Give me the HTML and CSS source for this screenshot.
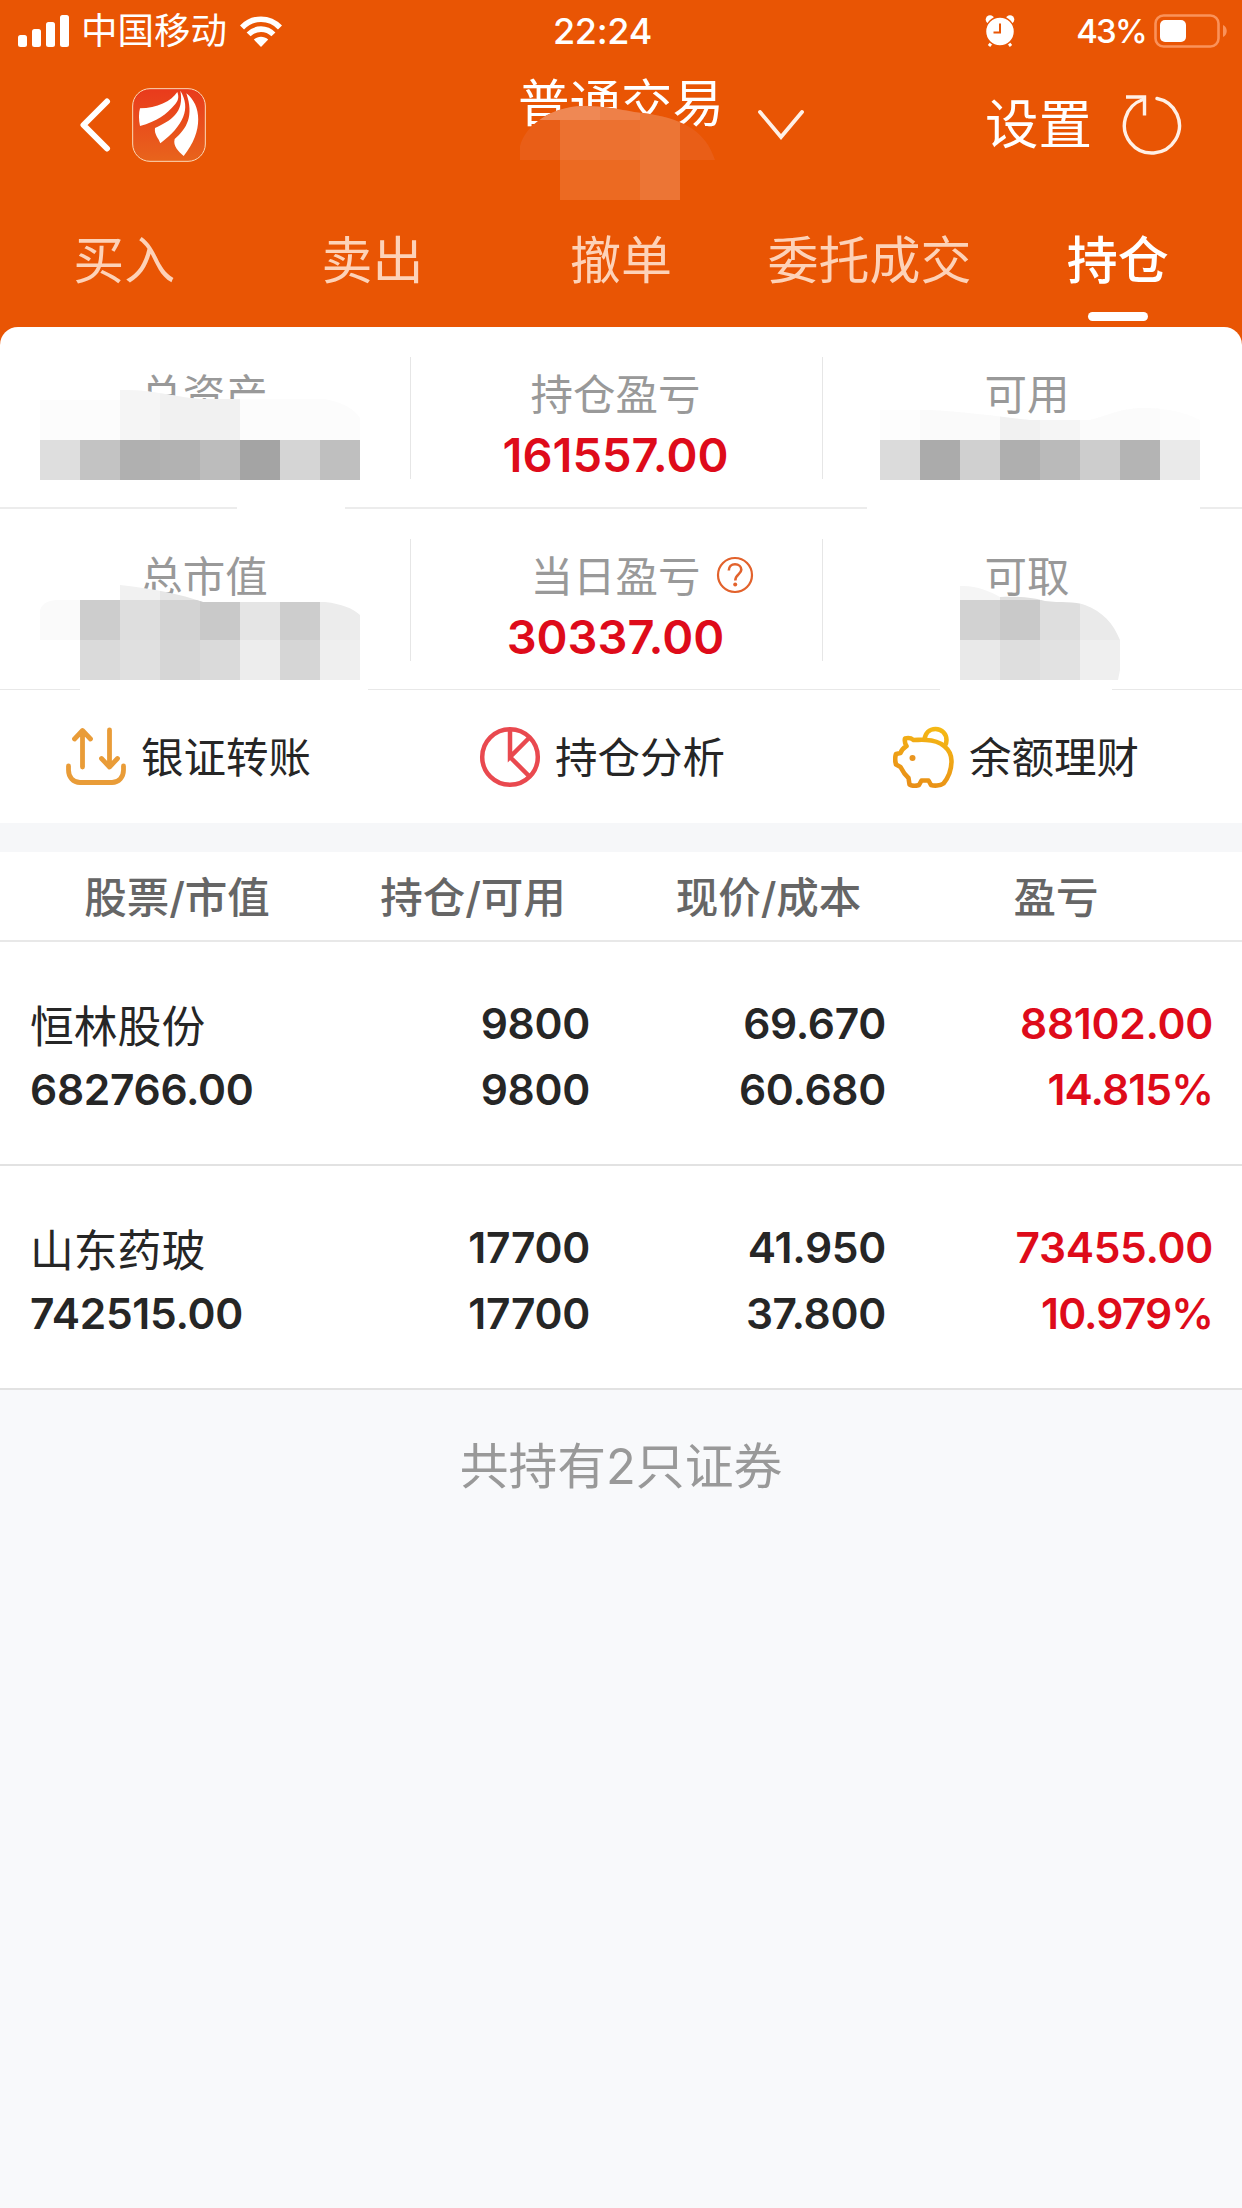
FILE: index.html
```html
<!DOCTYPE html>
<html lang="zh-CN">
<head>
  <meta charset="UTF-8">
  <meta name="viewport" content="width=device-width, initial-scale=1.0">
  <title>持仓</title>
  <link rel="stylesheet" href="styles.css">
</head>
<body>
  <header class="header">
    <div class="status">
      <div class="status-left">
        <svg class="signal" width="52" height="33" viewBox="0 0 52 33" fill="#fff">
          <rect x="0" y="20" width="9" height="12" rx="2.5"/>
          <rect x="14" y="14" width="9" height="18" rx="2.5"/>
          <rect x="28" y="7" width="9" height="25" rx="2.5"/>
          <rect x="42" y="0" width="9" height="32" rx="2.5"/>
        </svg>
        <span class="carrier">中国移动</span>
        <svg width="42" height="31" viewBox="0 0 42 31" fill="none" stroke="#fff" stroke-width="5.6">
          <path d="M2 11.5C12.500 .5 29.500 .5 40 11.500"/>
          <path d="M8.600 18.400C15.500 11.400 26.500 11.400 33.400 18.400"/>
          <path d="M21 31L13.800 23.600C18 19.800 24 19.800 28.200 23.600Z" fill="#fff" stroke="none"/>
        </svg>
      </div>
      <span class="time">22:24</span>
      <div class="status-right">
        <svg class="alarm" width="30" height="32" viewBox="0 0 30 32">
          <path d="M4 31l4-5M26 31l-4-5" stroke="#fff" stroke-width="3"/>
          <circle cx="5" cy="4.500" r="4.300" fill="#fff"/>
          <circle cx="25" cy="4.500" r="4.300" fill="#fff"/>
          <circle cx="15" cy="16.500" r="14.500" fill="#fff" stroke="#e95504" stroke-width="1.500"/>
          <path d="M15 8.500V17.500H8.500" fill="none" stroke="#e95504" stroke-width="2"/>
        </svg>
        <span class="percent">43%</span>
        <svg width="74" height="34" viewBox="0 0 74 34">
          <rect x="1.500" y="1.500" width="63" height="31" rx="8" fill="none" stroke="#fa925a" stroke-width="2.600"/>
          <rect x="6" y="6" width="26" height="22" rx="5" fill="#fff"/>
          <path d="M69 11c5 2 5 10 0 12z" fill="#fa925a"/>
        </svg>
      </div>
    </div>

    <div class="nav">
      <div class="nav-left">
        <svg width="32" height="56" viewBox="0 0 32 56" fill="none" stroke="#fff" stroke-width="6" stroke-linecap="round" stroke-linejoin="round">
          <path d="M27 4.500L3.500 28L27 51.500"/>
        </svg>
        <svg class="logo" width="74" height="74" viewBox="0 0 222 222">
          <defs>
            <linearGradient id="logoBg" x1="0" y1="0" x2="0" y2="1">
              <stop offset="0" stop-color="#e93a1c"/>
              <stop offset="1" stop-color="#e8641c"/>
            </linearGradient>
          </defs>
          <rect x="2" y="2" width="218" height="218" rx="52" fill="url(#logoBg)" stroke="#fbd9b8" stroke-width="3"/>
          <g fill="#fff">
            <path d="M24 61C75 60 118 40 136 12C142 28 138 38 130 48C103 80 75 100 24 114C20 95 20 75 24 61Z"/>
            <path d="M145 8C178 62 155 112 85 166C80 150 66 140 69 120C115 98 158 75 145 8Z"/>
            <path d="M163 16C208 50 216 130 155 204C140 190 122 175 128 153C165 122 186 84 163 16Z"/>
          </g>
        </svg>
      </div>
      <div class="nav-title">
        <span>普通交易</span>
        <svg class="arrow-down" width="46" height="30" viewBox="0 0 46 30" fill="none" stroke="#fff0e6" stroke-width="3.800" stroke-linecap="round">
          <path d="M2 2L23 27L44 2"/>
        </svg>
        <svg class="mask mask-title" width="196" height="94" viewBox="520 106 196 94">
          <clipPath id="clipTitle">
            <path d="M520 146C526 124 552 107 582 106C612 106 628 112 650 114C685 120 706 132 715 160V200H520Z"/>
          </clipPath>
          <g clip-path="url(#clipTitle)">
            <rect x="520" y="100" width="196" height="60" fill="#e95e17"/>
            <rect x="520" y="100" width="80" height="20" fill="#ef8854"/>
            <rect x="600" y="100" width="40" height="20" fill="#ee8048"/>
            <rect x="640" y="100" width="40" height="20" fill="#ec7737"/>
            <rect x="560" y="120" width="80" height="40" fill="#ec7130"/>
            <rect x="640" y="120" width="40" height="80" fill="#ec7535"/>
            <rect x="560" y="160" width="80" height="40" fill="#ec6a22"/>
          </g>
        </svg>
      </div>
      <div class="nav-right">
        <span>设置</span>
        <svg width="60" height="60" viewBox="0 0 60 60" fill="none" stroke="#fff0e6" stroke-width="3.400">
          <path d="M35 3.500A27.500 27.500 0 1 1 21 4.500" stroke-linecap="round"/>
          <path d="M4 2H22.500V20.500"/>
        </svg>
      </div>
    </div>

    <nav class="tabs">
      <span class="tab">买入</span>
      <span class="tab">卖出</span>
      <span class="tab">撤单</span>
      <span class="tab">委托成交</span>
      <span class="tab active">持仓</span>
    </nav>
  </header>

  <main>
    <section class="summary">
      <div class="summary-row">
        <div class="cell">
          <div class="label">总资产</div>
          <svg class="mask mask-asset" width="340" height="132" viewBox="30 388 340 132">
            <path d="M237 505H345V512H237Z" fill="#fff"/>
            <clipPath id="clipAsset">
              <path d="M40 400H120V390C150 389 170 396 200 399H325C345 403 355 410 360 418V480H40Z"/>
            </clipPath>
            <g clip-path="url(#clipAsset)">
              <rect x="40" y="388" width="320" height="92" fill="#fcfcfc"/>
              <rect x="120" y="388" width="40" height="52" fill="#f5f5f5"/>
              <rect x="160" y="388" width="80" height="52" fill="#f1f1f1"/>
              <rect x="40" y="440" width="40" height="40" fill="#dedede"/>
              <rect x="80" y="440" width="40" height="40" fill="#c3c3c3"/>
              <rect x="120" y="440" width="40" height="40" fill="#b0b0b0"/>
              <rect x="160" y="440" width="40" height="40" fill="#b2b2b2"/>
              <rect x="200" y="440" width="40" height="40" fill="#bcbcbc"/>
              <rect x="240" y="440" width="40" height="40" fill="#a4a4a4"/>
              <rect x="280" y="440" width="40" height="40" fill="#d5d5d5"/>
              <rect x="320" y="440" width="40" height="40" fill="#bfbfbf"/>
            </g>
          </svg>
        </div>
        <div class="cell">
          <div class="label">持仓盈亏</div>
          <div class="amount">161557.00</div>
        </div>
        <div class="cell">
          <div class="label">可用</div>
          <svg class="mask mask-usable" width="340" height="132" viewBox="864 388 340 132">
            <path d="M867 505H1200V512H867Z" fill="#fff"/>
            <clipPath id="clipUsable">
              <path d="M880 410H930C970 412 1000 417 1030 420H1090C1110 415 1120 408 1145 408C1165 408 1185 412 1200 420V480H880Z"/>
            </clipPath>
            <g clip-path="url(#clipUsable)">
              <rect x="880" y="400" width="320" height="40" fill="#fdfdfd"/>
              <rect x="920" y="400" width="80" height="40" fill="#fafafa"/>
              <rect x="1000" y="400" width="40" height="40" fill="#f1f1f1"/>
              <rect x="1040" y="400" width="40" height="40" fill="#f5f5f5"/>
              <rect x="1080" y="400" width="80" height="40" fill="#fbfbfb"/>
              <rect x="880" y="440" width="40" height="40" fill="#dbdbdb"/>
              <rect x="920" y="440" width="40" height="40" fill="#ababab"/>
              <rect x="960" y="440" width="40" height="40" fill="#d0d0d0"/>
              <rect x="1000" y="440" width="40" height="40" fill="#afafaf"/>
              <rect x="1040" y="440" width="40" height="40" fill="#bababa"/>
              <rect x="1080" y="440" width="40" height="40" fill="#cdcdcd"/>
              <rect x="1120" y="440" width="40" height="40" fill="#b4b4b4"/>
              <rect x="1160" y="440" width="40" height="40" fill="#eaeaea"/>
            </g>
          </svg>
        </div>
      </div>
      <div class="summary-row">
        <div class="cell">
          <div class="label">总市值</div>
          <svg class="mask mask-value" width="340" height="112" viewBox="30 584 340 112">
            <path d="M80 686H368V693H80Z" fill="#fff"/>
            <clipPath id="clipValue">
              <path d="M40 610C43 602 50 600 60 600H120V585C155 589 180 594 203 602H325C342 604 352 608 360 615V680H40Z"/>
            </clipPath>
            <g clip-path="url(#clipValue)">
              <rect x="40" y="600" width="40" height="40" fill="#fafafa"/>
              <rect x="120" y="584" width="40" height="16" fill="#f1f1f1"/>
              <rect x="160" y="584" width="50" height="18" fill="#e6e6e6"/>
              <rect x="80" y="600" width="40" height="40" fill="#cdcdcd"/>
              <rect x="120" y="600" width="40" height="40" fill="#dedede"/>
              <rect x="160" y="600" width="40" height="40" fill="#d3d3d3"/>
              <rect x="200" y="600" width="40" height="40" fill="#c9c9c9"/>
              <rect x="240" y="600" width="40" height="40" fill="#e5e5e5"/>
              <rect x="280" y="600" width="40" height="40" fill="#cdcdcd"/>
              <rect x="320" y="600" width="40" height="40" fill="#ececec"/>
              <rect x="80" y="640" width="40" height="40" fill="#dadada"/>
              <rect x="120" y="640" width="40" height="40" fill="#e0e0e0"/>
              <rect x="160" y="640" width="40" height="40" fill="#d6d6d6"/>
              <rect x="200" y="640" width="40" height="40" fill="#dadada"/>
              <rect x="240" y="640" width="40" height="40" fill="#ededed"/>
              <rect x="280" y="640" width="40" height="40" fill="#d6d6d6"/>
              <rect x="320" y="640" width="40" height="40" fill="#efefef"/>
            </g>
          </svg>
        </div>
        <div class="cell">
          <div class="label">当日盈亏
            <svg class="help" width="38" height="38" viewBox="0 0 38 38" fill="none" stroke="#e2622c" stroke-width="2.200">
              <circle cx="19" cy="19" r="17"/>
              <path d="M12.800 14.500C12.800 10.500 15.500 8.300 19 8.300C22.800 8.300 25.300 10.700 25.300 13.800C25.300 18 19.300 18.500 19.300 24.500" stroke-width="2.600"/>
              <circle cx="19.200" cy="28.500" r="2" fill="#e2622c" stroke="none"/>
            </svg>
          </div>
          <div class="amount">30337.00</div>
        </div>
        <div class="cell">
          <div class="label">可取</div>
          <svg class="mask mask-cash" width="190" height="112" viewBox="934 584 190 112">
            <path d="M940 686H1112V693H940Z" fill="#fff"/>
            <clipPath id="clipCash">
              <path d="M960 586C975 585 990 591 1000 597C1020 596 1035 598 1045 601C1060 603 1075 601 1085 605C1103 612 1113 623 1120 640V670L1118 680H960Z"/>
            </clipPath>
            <g clip-path="url(#clipCash)">
              <rect x="960" y="584" width="40" height="16" fill="#f5f5f5"/>
              <rect x="1000" y="584" width="40" height="16" fill="#e0e0e0"/>
              <rect x="960" y="600" width="40" height="40" fill="#d2d2d2"/>
              <rect x="1000" y="600" width="40" height="40" fill="#c9c9c9"/>
              <rect x="1040" y="600" width="40" height="40" fill="#dedede"/>
              <rect x="1080" y="600" width="40" height="40" fill="#eaeaea"/>
              <rect x="960" y="640" width="40" height="40" fill="#e9e9e9"/>
              <rect x="1000" y="640" width="40" height="40" fill="#dedede"/>
              <rect x="1040" y="640" width="40" height="40" fill="#e2e2e2"/>
              <rect x="1080" y="640" width="40" height="40" fill="#efefef"/>
            </g>
          </svg>
        </div>
      </div>
    </section>

    <section class="actions">
      <div class="action">
        <svg width="62" height="62" viewBox="0 0 62 62" fill="none" stroke="#e99c38" stroke-width="4.800" stroke-linecap="round" stroke-linejoin="round">
          <path d="M17.500 41V5M9.500 13L17.500 4.500L25.500 13"/>
          <path d="M44.500 4V41M36.500 32.500L44.500 41L52.500 32.500"/>
          <path d="M3.500 40V44C3.500 51 8 56.500 15 56.500H47C54 56.500 58.500 51 58.500 44V40"/>
        </svg>
        <span>银证转账</span>
      </div>
      <div class="action">
        <svg width="62" height="62" viewBox="0 0 62 62" fill="none" stroke="#e9494f" stroke-width="4.500">
          <circle cx="31" cy="31" r="27.800"/>
          <path d="M31 3V31L50.500 11.500M31 31L50.500 50.500"/>
        </svg>
        <span>持仓分析</span>
      </div>
      <div class="action">
        <svg width="62" height="62" viewBox="0 0 62 62" fill="none" stroke="url(#pig)" stroke-width="4.600" stroke-linejoin="round">
          <defs>
            <linearGradient id="pig" gradientUnits="userSpaceOnUse" x1="40" y1="0" x2="20" y2="62">
              <stop offset="0" stop-color="#f5b914"/>
              <stop offset="1" stop-color="#e88d17"/>
            </linearGradient>
          </defs>
          <path d="M31.500 14C32 7 36.500 3 42.500 3C49 3 53.500 8 53.500 14C53.500 16 53 18 52 19.500"/>
          <path d="M12 12.500C15.500 11.500 18 12 20.500 14C25 14 29 13.500 33 14C48 14.500 58.500 23 58.500 35C58.500 44 55 52 50.500 57.500C47 60 41 60 38 59L35.500 54.500H28.500L26 59C23 60 19 60 16.500 58.500L15.500 52C11 48 9.500 45 7.500 41L3 38.500C2 35 2 31 3 28L7.500 27C8.500 24 10.500 22 13.500 20C11.500 17 11.500 15 12 12.500Z"/>
          <circle cx="19.500" cy="32" r="3" fill="#e99520" stroke="none"/>
        </svg>
        <span>余额理财</span>
      </div>
    </section>

    <section class="holdings">
      <div class="thead">
        <span>股票/市值</span>
        <span>持仓/可用</span>
        <span>现价/成本</span>
        <span>盈亏</span>
      </div>
      <div class="stock">
        <div class="col name"><b>恒林股份</b><span>682766.00</span></div>
        <div class="col"><span>9800</span><span>9800</span></div>
        <div class="col"><span>69.670</span><span>60.680</span></div>
        <div class="col up"><span>88102.00</span><span class="rate">14.815%</span></div>
      </div>
      <div class="stock">
        <div class="col name"><b>山东药玻</b><span>742515.00</span></div>
        <div class="col"><span>17700</span><span>17700</span></div>
        <div class="col"><span>41.950</span><span>37.800</span></div>
        <div class="col up"><span>73455.00</span><span class="rate">10.979%</span></div>
      </div>
    </section>

    <p class="total">共持有2只证券</p>
  </main>
</body>
</html>
```
FILE: styles.css
```css
* {
  box-sizing: border-box;
}
body {
  margin: 0;
  min-height: 2208px;
  background: #f8f9fb;
  color: #262626;
  font-family: Inter, "Noto Sans CJK SC", sans-serif;
}
svg {
  display: block;
  flex: none;
}

/* header */
.header {
  height: 345px;
  background: #e95504;
  color: #fff;
}
.status {
  display: grid;
  grid-template-columns: 516px 137px 1fr;
  align-items: center;
  height: 60px;
  padding: 0 14px 0 18px;
}
.status-left,
.status-right {
  display: flex;
  align-items: center;
}
.status-right {
  justify-content: flex-end;
}
.signal {
  margin-right: 11px;
}
.carrier {
  margin-right: 13px;
  font-size: 36.500px;
  line-height: 58px;
}
.time {
  font-size: 36px;
  font-weight: 500;
  line-height: 62px;
  text-align: center;
  letter-spacing: -0.3px;
}
.alarm {
  margin-right: 61px;
}
.percent {
  margin-right: 8px;
  font-size: 33px;
  font-weight: 500;
  line-height: 58px;
  letter-spacing: -1.8px;
}
.nav {
  display: grid;
  grid-template-columns: 518px 1fr auto;
  grid-template-rows: 130px;
  height: 130px;
  padding-right: 60px;
}
.nav-left {
  display: flex;
  align-items: center;
  gap: 20px;
  padding-left: 80px;
}
.nav-title {
  position: relative;
  display: flex;
  align-items: flex-start;
  gap: 34px;
  font-size: 51.500px;
  line-height: 86px;
}
.arrow-down {
  margin-top: 50px;
}
.nav-right {
  display: flex;
  align-items: center;
  gap: 30px;
  font-size: 53.500px;
  line-height: 134px;
}
.tabs {
  display: flex;
  height: 137px;
}
.tab {
  position: relative;
  flex: 1 1 0;
  font-size: 51px;
  line-height: 142px;
  text-align: center;
  color: #fdd2b8;
}
.tab.active {
  color: #fff;
  font-weight: 500;
}
.tab.active::after {
  content: "";
  position: absolute;
  left: 50%;
  bottom: 6px;
  width: 60px;
  height: 9px;
  margin-left: -30px;
  border-radius: 5px;
  background: #fff;
}

/* summary */
.summary {
  position: relative;
  margin-top: -18px;
  border-radius: 18px 18px 0 0;
  background: #fff;
}
.summary-row {
  display: grid;
  grid-template-columns: 411px 412px 1fr;
  height: 182px;
  border-bottom: 2px solid #ececec;
}
.summary-row + .summary-row {
  height: 181px;
  border-bottom: 1px solid #e8e8e8;
}
.cell {
  position: relative;
  padding: 38px 3px 0 0;
  text-align: center;
}
.cell:last-child {
  padding-right: 11px;
}
.cell:not(:last-child)::after {
  content: "";
  position: absolute;
  top: 30px;
  right: 0;
  width: 1px;
  height: 122px;
  background: #e6e6e6;
}
.label {
  position: relative;
  font-size: 42.500px;
  line-height: 60px;
  color: #999;
}
.help {
  position: absolute;
  left: 305px;
  top: 9px;
}
.amount {
  font-size: 47px;
  font-weight: 600;
  line-height: 60px;
  color: #de0b1a;
}
.mask {
  position: absolute;
}
.mask-title {
  left: 2px;
  top: 46px;
}
.mask-asset {
  left: 30px;
  top: 61px;
}
.mask-usable {
  left: 41px;
  top: 61px;
}
.mask-value {
  left: 30px;
  top: 75px;
}
.mask-cash {
  left: 111px;
  top: 75px;
}

/* quick actions */
.actions {
  display: grid;
  grid-template-columns: 414px 414px 1fr;
  height: 133px;
  padding: 1px 0 0 65px;
  background: #fff;
}
.action {
  display: flex;
  align-items: center;
  gap: 14px;
  font-size: 42.500px;
}
.action span {
  padding-bottom: 5px;
}

/* holdings */
.holdings {
  border-top: 29px solid #f6f7f9;
  background: #fff;
}
.thead {
  display: grid;
  grid-template-columns: 296px 296px 295px 280px;
  height: 90px;
  padding-left: 29px;
  border-bottom: 2px solid #e8e8e8;
  font-size: 42.500px;
  font-weight: 500;
  line-height: 92px;
  text-align: center;
  color: #666;
}
.stock {
  display: grid;
  grid-template-columns: 296px 264px 296px 327px;
  height: 224px;
  padding: 49px 29px 0 30px;
  border-bottom: 2px solid #e2e2e2;
}
.col {
  display: flex;
  flex-direction: column;
  font-size: 42.500px;
  font-weight: 600;
  line-height: 66px;
  letter-spacing: -0.3px;
  text-align: right;
}
.name {
  text-align: left;
}
.name b {
  height: 66px;
  padding-top: 4px;
  font-size: 43.800px;
  font-weight: 400;
  letter-spacing: 0;
}
.up {
  color: #de0b1a;
}
.rate {
  letter-spacing: -0.9px;
}
.total {
  margin: 0;
  font-size: 48.800px;
  line-height: 153px;
  text-align: center;
  color: #999;
}
```
